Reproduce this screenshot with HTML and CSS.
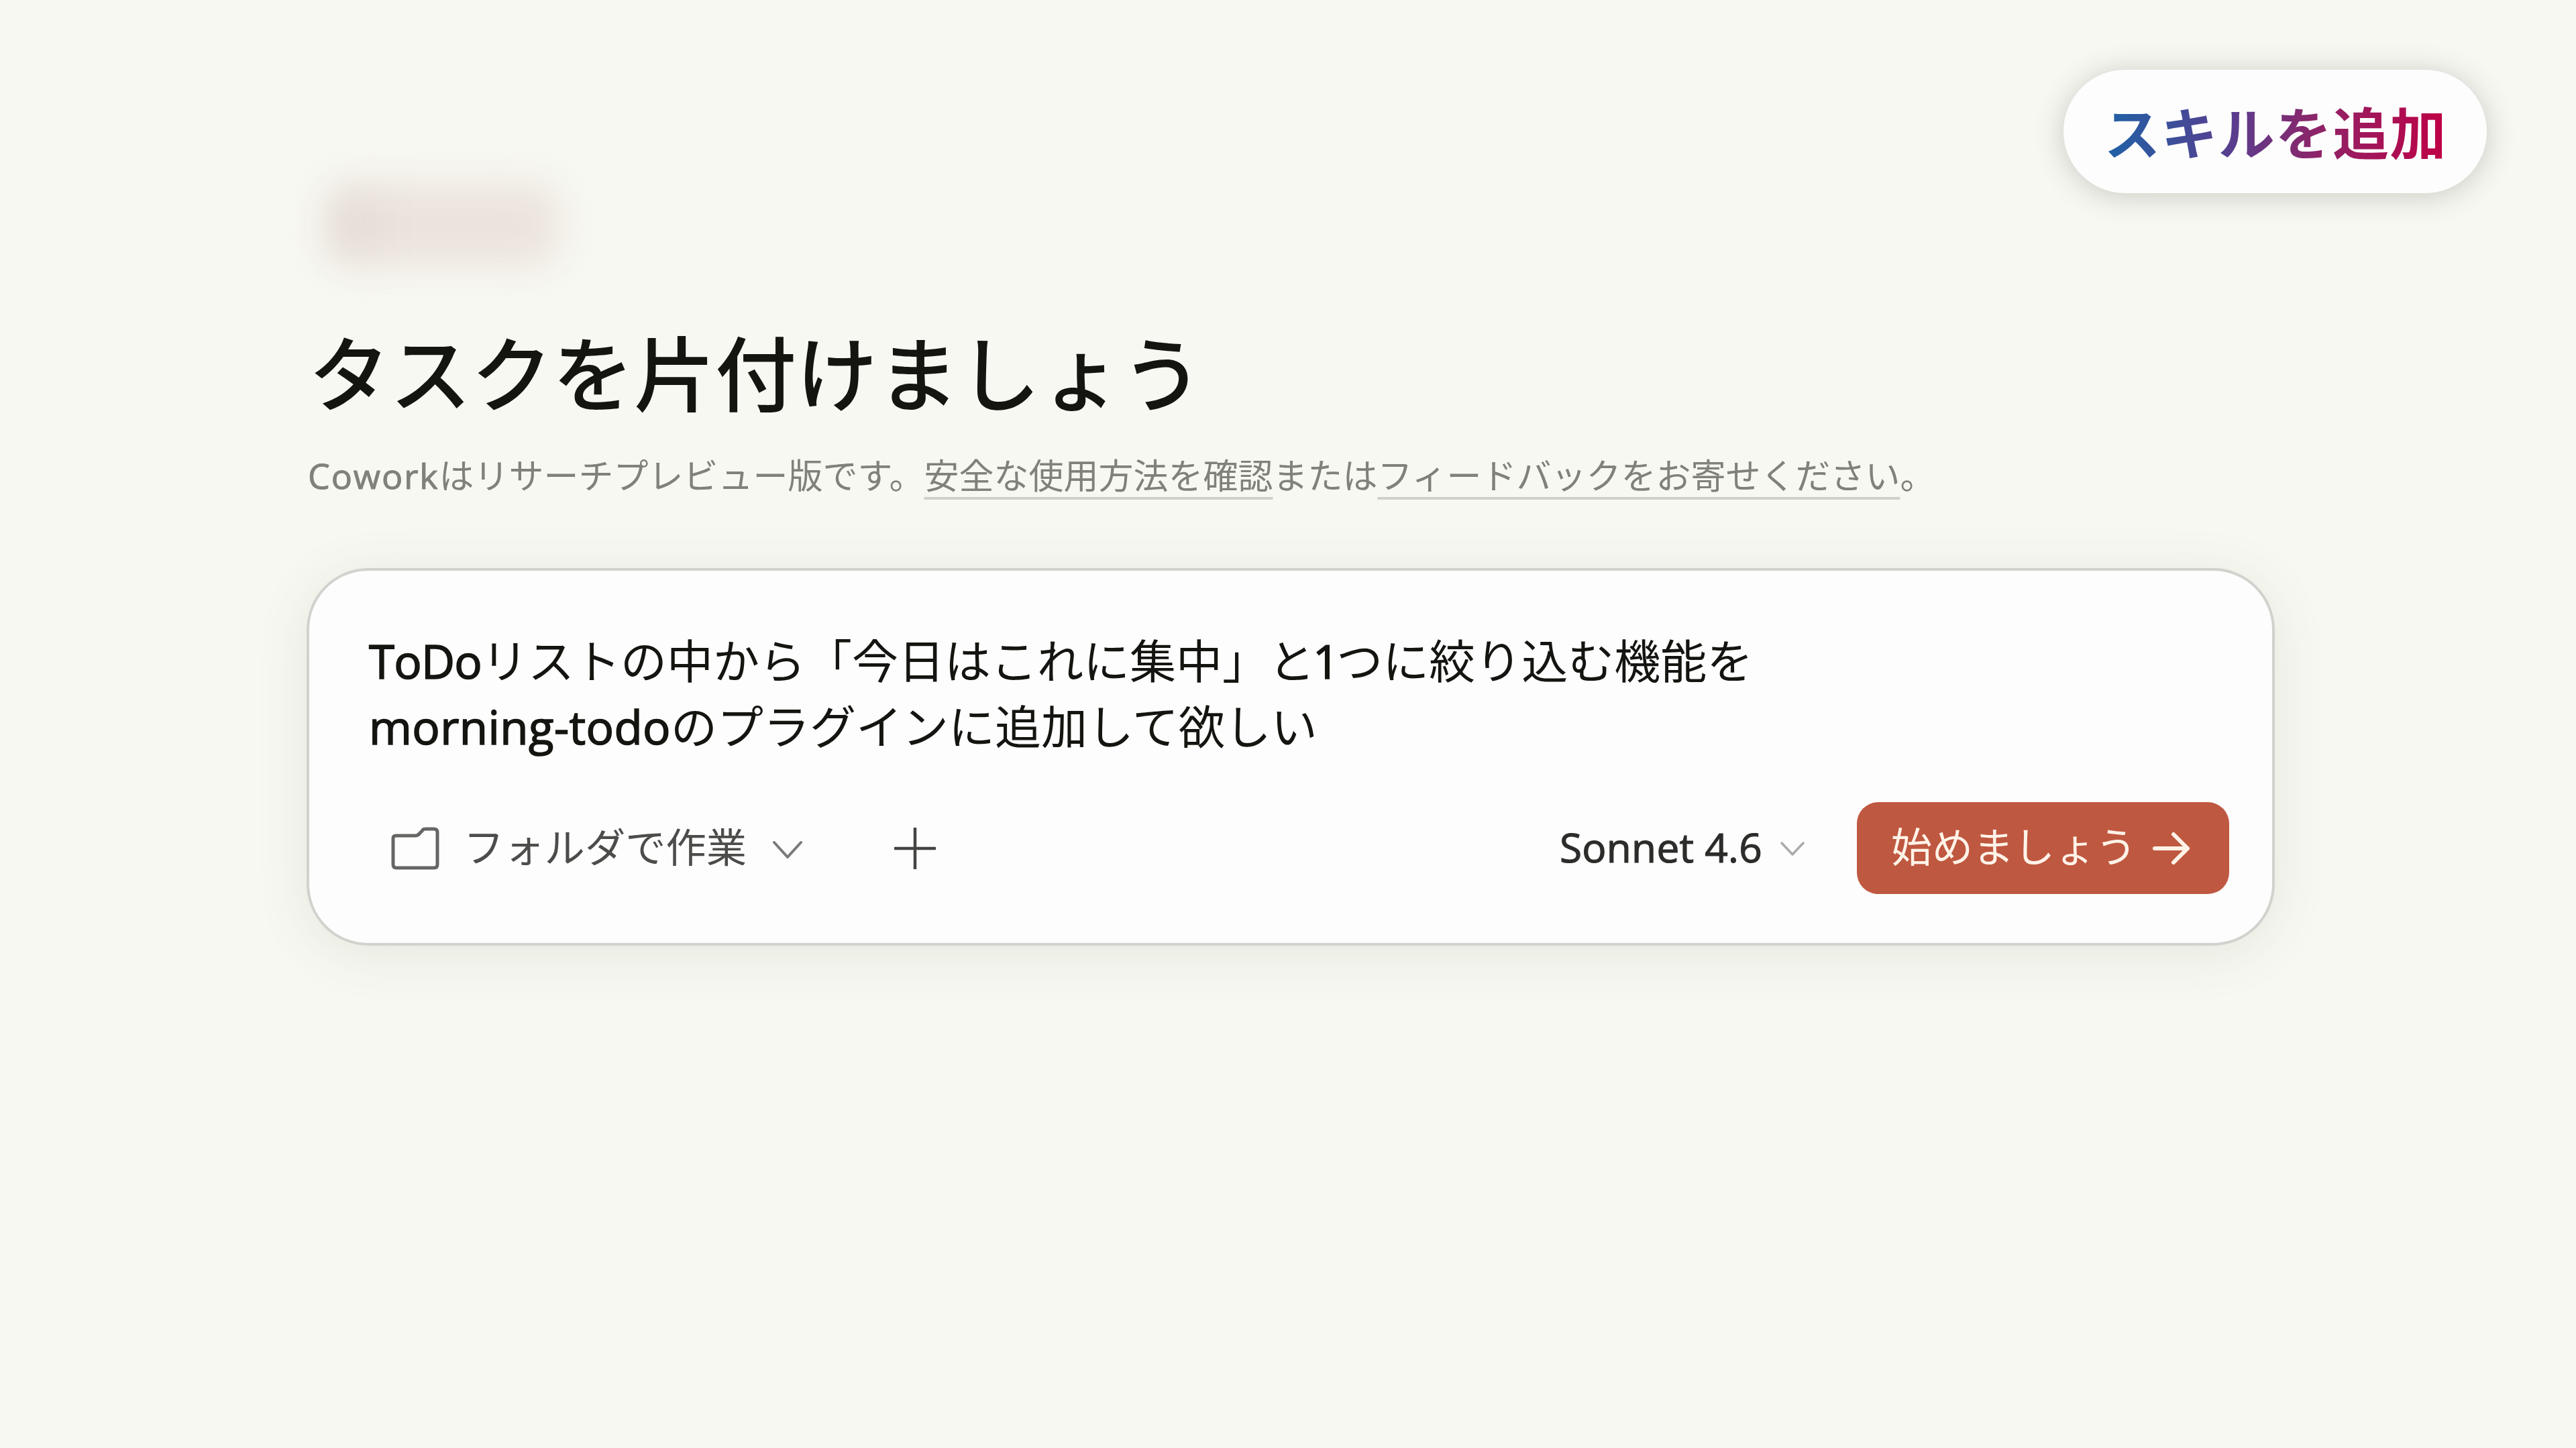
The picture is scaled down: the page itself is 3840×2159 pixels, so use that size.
FILE: index.html
```html
<!DOCTYPE html>
<html lang="ja">
<head>
  <meta charset="UTF-8" />
  <meta name="viewport" content="width=device-width, initial-scale=1.0">
  <title>Cowork</title>
  <link rel="stylesheet" href="styles.css">
</head>
<body>
  <div class="badge"><span class="badge-text">スキルを追加</span></div>

  <main class="page">
    <div class="chip"></div>
    <h1>タスクを片付けましょう</h1>
    <p class="subtitle"><span class="brand">Cowork</span>はリサーチプレビュー版です。<a href="#">安全な使用方法を確認</a>または<a href="#">フィードバックをお寄せください</a>。</p>

    <section class="card">
      <p class="prompt"><span class="latin tight">ToDo</span>リストの中から「今日はこれに集中」と<span class="latin digit">1</span>つに絞り込む機能を<br><span class="latin">morning-todo</span>のプラグインに追加して欲しい</p>

      <div class="toolbar">
        <div class="folder">
          <svg class="icon-folder" viewBox="0 0 76 68" fill="none">
            <path d="M9 15H38C41 15 43 14 45 11L48 8C50 5 51 5 54 5H66Q71 5 71 10V58Q71 63 66 63H10Q5 63 5 58V19Q5 15 9 15Z"/>
          </svg>
          <span class="label">フォルダで作業</span>
          <svg class="chevron" viewBox="0 0 46 28" fill="none"><path d="M3 3L23 25L43 3"/></svg>
        </div>
        <svg class="icon-plus" viewBox="0 0 62 62" fill="none"><path d="M31 1V61M1 31H61"/></svg>
        <div class="model">
          <span class="label">Sonnet 4.6</span>
          <svg class="chevron-small" viewBox="0 0 38 24" fill="none"><path d="M3 3L19 20L35 3"/></svg>
        </div>
        <button class="start" type="button">
          <span class="label">始めましょう</span>
          <svg class="icon-arrow" viewBox="0 0 56 50" fill="none"><path d="M3 25H52M31 4L52 25L31 46"/></svg>
        </button>
      </div>
    </section>
  </main>
</body>
</html>
```
FILE: styles.css
```css
html, body {
  margin: 0;
  padding: 0;
  height: 100%;
  overflow: hidden;
}
body {
  position: relative;
  background: #f7f8f1;
  font-family: "Open Sans", "Noto Sans CJK JP", sans-serif;
  color: #141410;
}
.page {
  box-sizing: border-box;
  width: 3391px;
  padding: 275px 0 0 457px;
}
.badge {
  position: absolute;
  top: 104px;
  right: 133px;
  width: 631px;
  height: 184px;
  border-radius: 92px;
  background: #fdfdfd;
  box-shadow: 0 4px 44px rgba(60,60,50,0.24);
  display: flex;
  align-items: center;
  justify-content: center;
}
.badge-text {
  font-size: 84px;
  font-weight: 700;
  line-height: 120px;
  letter-spacing: 1.2px;
  padding: 6px 0 0 1px;
  background: linear-gradient(90deg, #1d62a6 0%, #5a3d8e 38%, #8d2468 62%, #c00045 100%);
  -webkit-background-clip: text;
  background-clip: text;
  color: transparent;
}
.chip {
  width: 346px;
  height: 120px;
  margin: 0 0 93px 29px;
  border-radius: 36px;
  background: linear-gradient(90deg, #e4dad4, #ece3dd 35%, #ece3dd);
  filter: blur(26px);
}
h1 {
  margin: 0;
  padding-left: 3px;
  font-size: 121.2px;
  font-weight: 500;
  line-height: 138px;
}
.subtitle {
  margin: 43px 0 98px;
  padding-left: 2px;
  font-size: 52px;
  line-height: 80px;
  color: #80817b;
}
.subtitle .brand {
  letter-spacing: 1.9px;
  -webkit-text-stroke: 1px #80817b;
}
.subtitle a {
  color: inherit;
  text-decoration: underline;
  text-decoration-color: #cfd0c9;
  text-decoration-thickness: 4px;
  text-underline-offset: 12px;
  text-decoration-skip-ink: none;
}
.card {
  box-sizing: border-box;
  height: 563px;
  padding: 85px 64px 0 89px;
  border: 4px solid #d1d2cd;
  border-radius: 92px;
  background: #fdfdfd;
  box-shadow: 0 12px 80px rgba(80,80,60,0.1);
}
.prompt {
  margin: 0;
  font-size: 69px;
  line-height: 98px;
}
.latin {
  letter-spacing: 0.4px;
  -webkit-text-stroke: 1.6px #141410;
}
.latin.tight {
  letter-spacing: -0.8px;
}
.latin.digit {
  letter-spacing: -4px;
  margin-left: -3px;
}
.toolbar {
  display: flex;
  align-items: center;
  height: 137px;
  margin-top: 64px;
  padding-left: 31px;
  font-size: 60.3px;
  color: #4c4c4a;
}
.toolbar svg {
  display: block;
  stroke-linecap: round;
  stroke-linejoin: round;
}
.toolbar .label {
  line-height: 80px;
  padding-bottom: 4px;
}
.folder {
  display: flex;
  align-items: center;
}
.icon-folder {
  width: 76px;
  height: 68px;
  margin-right: 34px;
  stroke: #666664;
  stroke-width: 5;
}
.chevron {
  width: 46px;
  height: 28px;
  margin: 4px 0 0 38px;
  stroke: #7a7a78;
  stroke-width: 4;
}
.icon-plus {
  width: 62px;
  height: 62px;
  margin-left: 136px;
  stroke: #444442;
  stroke-width: 4.5;
}
.model {
  display: flex;
  align-items: center;
  margin-left: auto;
  color: #2c2c2a;
  letter-spacing: 0.3px;
  -webkit-text-stroke: 1.2px #2c2c2a;
}
.chevron-small {
  width: 38px;
  height: 24px;
  margin: 2px 0 0 26px;
  stroke: #aaaaa8;
  stroke-width: 3.5;
}
.start {
  display: flex;
  align-items: center;
  box-sizing: border-box;
  width: 555px;
  height: 137px;
  margin-left: 77px;
  padding: 0 0 0 51px;
  border: none;
  border-radius: 32px;
  background: #bf5840;
  color: #fff3e8;
  font-family: inherit;
  font-size: 61px;
}
.icon-arrow {
  width: 56px;
  height: 50px;
  margin-left: 24px;
  stroke: #fff3e8;
  stroke-width: 6;
}
```
